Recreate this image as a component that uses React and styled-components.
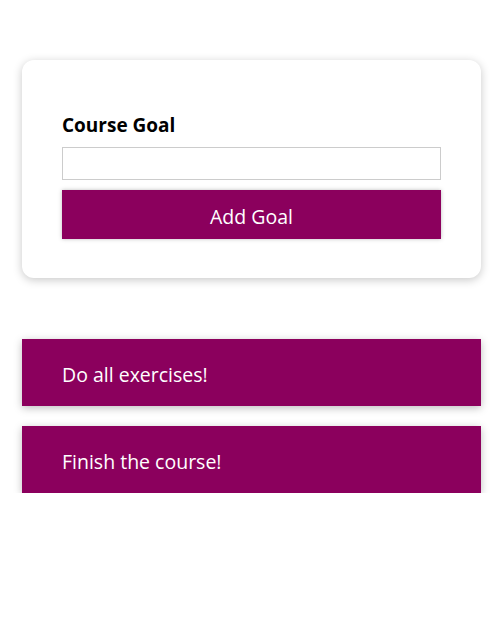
import styled, { createGlobalStyle } from "styled-components";

const GlobalStyle = createGlobalStyle`
  * { box-sizing: border-box; }
  body {
    margin: 0;
    background: #ffffff;
    font-family: "Open Sans", "Noto Sans CJK KR", sans-serif;
  }
`;

const Page = styled.div`
  padding: 60px 12px 0 22px;
`;

const GoalForm = styled.section`
  background: #ffffff;
  border-radius: 12px;
  padding: 51px 40px 39px;
  box-shadow: 0 2px 10px rgba(0, 0, 0, 0.22);
`;

const Label = styled.label`
  display: block;
  font-weight: bold;
  font-size: 19px;
  line-height: 29px;
  color: #000;
  margin-bottom: 7px;
`;

const Input = styled.input`
  display: block;
  width: 100%;
  height: 33px;
  border: 1px solid #ccc;
  font: inherit;
  padding: 0 4px;
  margin-bottom: 10px;
  outline: none;
`;

const Button = styled.button`
  display: block;
  width: 100%;
  height: 49px;
  padding: 3px 0 0;
  font: inherit;
  font-size: 19.5px;
  color: #fff;
  background: #8b005d;
  border: 1px solid #8b005d;
  box-shadow: 0 0 4px rgba(0, 0, 0, 0.26);
  cursor: pointer;
`;

const GoalList = styled.ul`
  list-style: none;
  margin: 61px 0 0;
  padding: 0;
  display: flex;
  flex-direction: column;
  gap: 20px;
`;

const GoalItem = styled.li`
  height: 67px;
  display: flex;
  align-items: center;
  padding: 3px 40px 0;
  background: #8b005d;
  color: #fff;
  font-size: 19.5px;
  box-shadow: 0 2px 8px rgba(0, 0, 0, 0.26);
`;

const goals = ["Do all exercises!", "Finish the course!"];

const App = () => {
  return (
    <>
      <GlobalStyle />
      <Page>
        <GoalForm>
          <Label htmlFor="goal">Course Goal</Label>
          <Input id="goal" type="text" />
          <Button type="submit">Add Goal</Button>
        </GoalForm>
        <GoalList>
          {goals.map((g) => (
            <GoalItem key={g}>{g}</GoalItem>
          ))}
        </GoalList>
      </Page>
    </>
  );
};

export default App;
